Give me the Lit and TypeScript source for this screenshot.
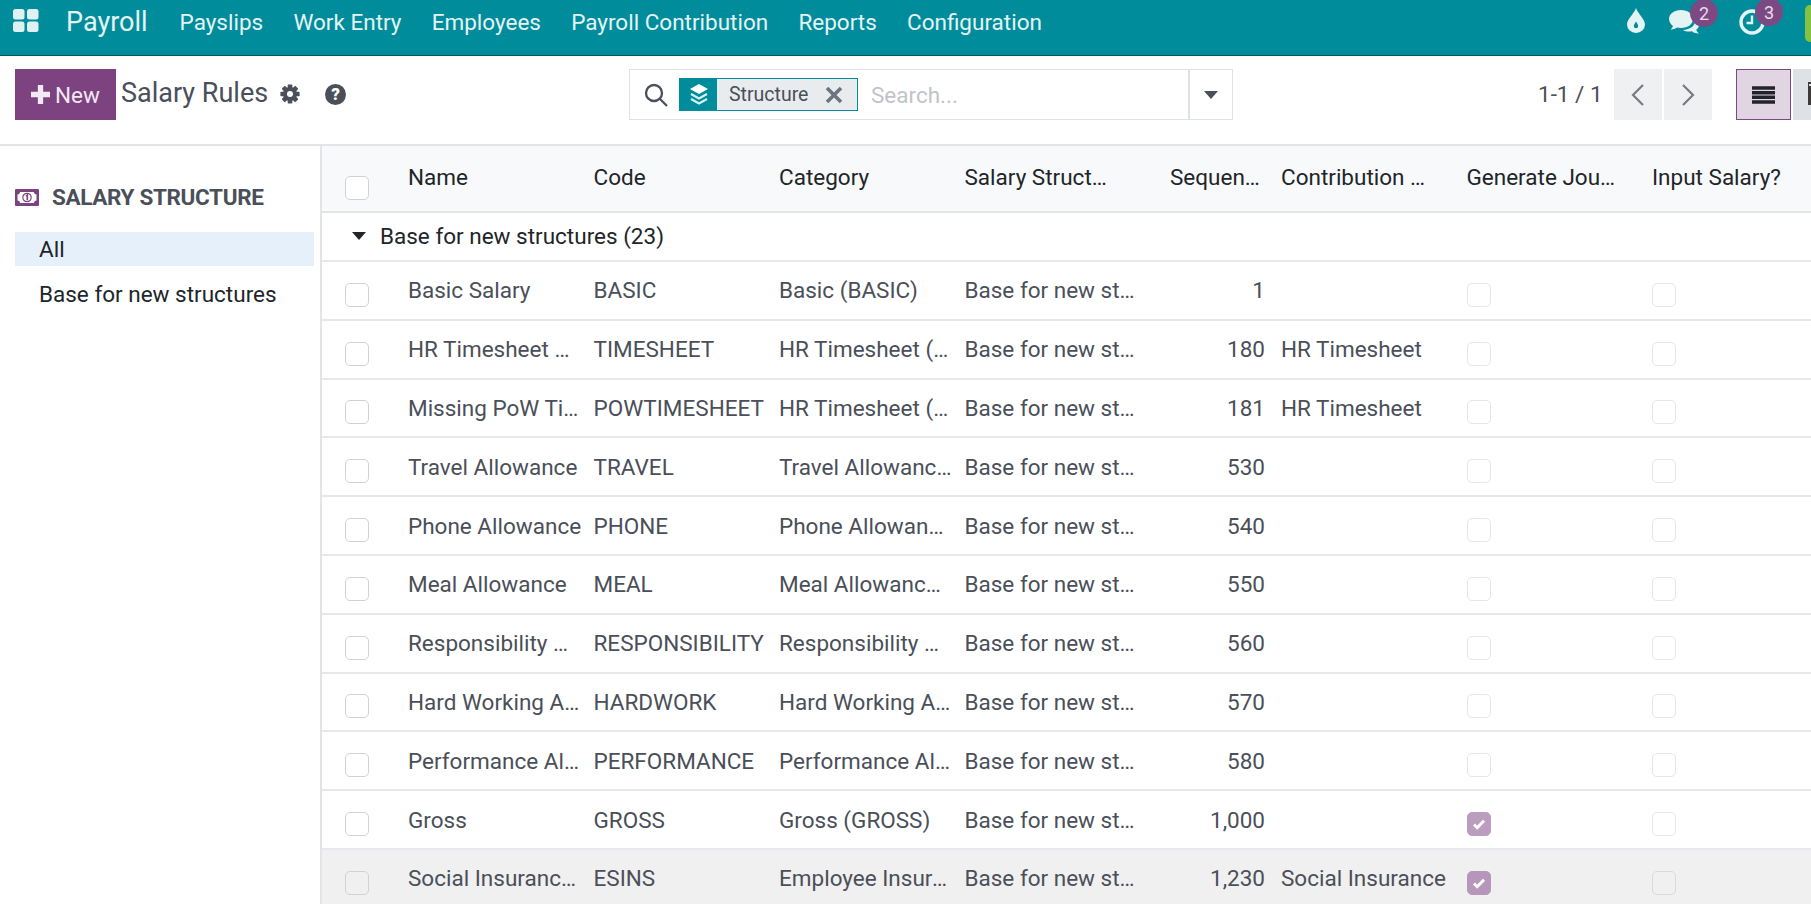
import { LitElement, html, css, svg } from "lit";
import { customElement } from "lit/decorators.js";

const menu = ["Payslips", "Work Entry", "Employees", "Payroll Contribution", "Reports", "Configuration"];

const columns = [
  { label: "Name", cls: "" },
  { label: "Code", cls: "" },
  { label: "Category", cls: "" },
  { label: "Salary Structure", cls: "" },
  { label: "Sequence", cls: "num" },
  { label: "Contribution Register", cls: "" },
  { label: "Generate Journal Entry", cls: "" },
  { label: "Input Salary?", cls: "" },
];

type Rule = [string, string, string, string, string, boolean?];

const rules: Rule[] = [
  ["Basic Salary", "BASIC", "Basic (BASIC)", "1", ""],
  ["HR Timesheet Deduction", "TIMESHEET", "HR Timesheet (TIMESHEET)", "180", "HR Timesheet"],
  ["Missing PoW Timesheet", "POWTIMESHEET", "HR Timesheet (TIMESHEET)", "181", "HR Timesheet"],
  ["Travel Allowance", "TRAVEL", "Travel Allowance (TRAVEL)", "530", ""],
  ["Phone Allowance", "PHONE", "Phone Allowance (PHONE)", "540", ""],
  ["Meal Allowance", "MEAL", "Meal Allowance (MEAL)", "550", ""],
  ["Responsibility Allowance", "RESPONSIBILITY", "Responsibility Allowance", "560", ""],
  ["Hard Working Allowance", "HARDWORK", "Hard Working Allowance", "570", ""],
  ["Performance Allowance", "PERFORMANCE", "Performance Allowance", "580", ""],
  ["Gross", "GROSS", "Gross (GROSS)", "1,000", "", true],
  ["Social Insurance Employee", "ESINS", "Employee Insurance (ESINS)", "1,230", "Social Insurance", true],
];

const gear = svg`<svg class="gear" viewBox="0 0 20 20">
  <g fill="#4a4f59">
    ${[0, 45, 90, 135, 180, 225, 270, 315].map(
      (a) => svg`<rect x="7.7" y="0.4" width="4.6" height="5" rx="0.8" transform="rotate(${a} 10 10)"></rect>`
    )}
    <circle cx="10" cy="10" r="7"></circle>
  </g>
  <circle cx="10" cy="10" r="3" fill="#fff"></circle>
</svg>`;

@customElement("app-root")
export class AppRoot extends LitElement {
  static styles = css`
    :host {
      display: block;
      width: 1811px;
      height: 904px;
      overflow: hidden;
      background: #fff;
      font-family: Roboto, "Noto Sans", sans-serif;
      font-size: 22.5px;
      color: #4a4f59;
    }

    /* top bar */
    .navbar {
      height: 55px;
      background: #018c9b;
      border-bottom: 1px solid #01575c;
      display: flex;
      align-items: center;
      padding-left: 13px;
      color: #e4f4f5;
      position: relative;
    }
    .apps {
      width: 26px;
      height: 26px;
      margin-top: -12px;
      display: block;
    }
    .brand {
      font-size: 27px;
      margin-left: 27px;
      margin-right: 32px;
      margin-top: -12px;
    }
    .menu {
      display: flex;
      gap: 30.2px;
      font-size: 22.5px;
      margin-top: -12px;
    }
    .systray {
      margin-left: auto;
      display: flex;
      align-items: center;
      height: 100%;
    }
    .tray {
      position: relative;
      display: block;
    }
    .drop {
      width: 18px;
      height: 25px;
      margin-top: -14px;
      margin-right: 24px;
    }
    .chat {
      width: 31px;
      height: 25px;
      margin-top: -11px;
      margin-right: 39px;
    }
    .clock {
      width: 26px;
      height: 26px;
      margin-top: -12px;
      margin-right: 40px;
    }
    .badge {
      position: absolute;
      width: 28px;
      height: 28px;
      border-radius: 50%;
      background: #7c4a83;
      color: #e8dcea;
      font-size: 18px;
      display: flex;
      align-items: center;
      justify-content: center;
    }
    .badge.two {
      left: 1690px;
      top: -1px;
    }
    .badge.three {
      left: 1755px;
      top: -2px;
    }
    .user {
      width: 6px;
      height: 37px;
      margin-top: -9px;
      background: #84c341;
      border-radius: 5px 0 0 5px;
    }

    /* control panel */
    .panel {
      height: 90px;
      box-sizing: border-box;
      border-bottom: 2px solid #e2e4e8;
      display: grid;
      grid-template-columns: 629px 604px 1fr;
      padding-top: 13px;
    }
    .left {
      display: flex;
      align-items: flex-start;
      padding-left: 15px;
    }
    .new {
      width: 101px;
      height: 51px;
      background: #7c4380;
      color: #f3e9f3;
      display: flex;
      align-items: center;
      justify-content: center;
      gap: 5px;
      font-size: 22.5px;
    }
    .plus {
      width: 19px;
      height: 19px;
    }
    .title {
      font-size: 27px;
      margin-left: 5px;
      line-height: 48px;
    }
    .gear {
      width: 20px;
      height: 20px;
      margin-left: 12px;
      margin-top: 15px;
    }
    .help {
      width: 21px;
      height: 21px;
      margin-left: 25px;
      margin-top: 15px;
      border-radius: 50%;
      background: #4a4f59;
      color: #fff;
      font-size: 17px;
      font-weight: 900;
      line-height: 21px;
      text-align: center;
    }
    .search {
      height: 51px;
      box-sizing: border-box;
      border: 1px solid #dee2e6;
      display: flex;
      align-items: center;
    }
    .lens {
      width: 24px;
      height: 24px;
      margin-left: 14px;
    }
    .facet {
      height: 33px;
      box-sizing: border-box;
      margin-left: 11px;
      width: 179px;
      display: flex;
      border: 1px solid #018c9b;
      background: #e9ecef;
      font-size: 19.5px;
      align-items: center;
    }
    .facet-icon {
      width: 37px;
      height: 100%;
      background: #018c9b;
      display: flex;
      align-items: center;
      justify-content: center;
    }
    .facet-icon svg {
      width: 20px;
      height: 24px;
    }
    .facet-label {
      margin-left: 12px;
      width: 96px;
    }
    .facet-x {
      width: 18px;
      height: 18px;
    }
    .placeholder {
      margin-left: 13px;
      color: #bfc4ca;
      font-size: 22.5px;
      flex: 1;
    }
    .more {
      width: 42px;
      height: 100%;
      border-left: 2px solid #dee2e6;
      display: flex;
      align-items: center;
      justify-content: center;
    }
    .caret {
      width: 0;
      height: 0;
      border-left: 7px solid transparent;
      border-right: 7px solid transparent;
      border-top: 8px solid #4a4f59;
    }
    .right {
      display: flex;
      align-items: flex-start;
      padding-left: 305px;
    }
    .count {
      font-size: 22.5px;
      line-height: 51px;
      width: 76px;
    }
    .page {
      width: 48px;
      height: 51px;
      background: #eef0f2;
      margin-right: 2px;
      display: flex;
      align-items: center;
      justify-content: center;
    }
    .page svg {
      width: 16px;
      height: 24px;
    }
    .view {
      width: 55px;
      height: 51px;
      box-sizing: border-box;
      margin-left: 22px;
      background: #e2d5e3;
      border: 1px solid #7c4a83;
      display: flex;
      align-items: center;
      justify-content: center;
    }
    .view svg {
      width: 23px;
      height: 18px;
    }
    .view2 {
      width: 18px;
      height: 51px;
      margin-left: 2px;
      background: #dee2e6;
      overflow: hidden;
      display: flex;
      align-items: center;
      padding-left: 15px;
      box-sizing: border-box;
    }
    .view2 span {
      flex: none;
      width: 12px;
      height: 19px;
      margin-top: 1px;
      background: #3f3a3a;
      box-shadow: 0 -3px 0 -1px #dee2e6, 0 -4px 0 0 #3f3a3a;
    }

    /* content */
    .content {
      display: flex;
      height: 759px;
    }
    .sidebar {
      width: 322px;
      box-sizing: border-box;
      flex: none;
      border-right: 2px solid #e2e4e8;
      padding: 0 6px 0 15px;
    }
    .side-head {
      display: flex;
      align-items: center;
      gap: 13px;
      margin-top: 37px;
      height: 28px;
      font-weight: 700;
      font-size: 22.5px;
      letter-spacing: -0.35px;
    }
    .side-head svg {
      width: 24px;
      height: 17px;
    }
    .side-item {
      height: 34px;
      line-height: 34px;
      padding-left: 24px;
      margin-top: 11px;
      color: #212529;
      font-size: 22.5px;
    }
    .side-item.on {
      margin-top: 21px;
      background: #e6f0fb;
    }

    .list {
      flex: 1;
      overflow: hidden;
    }
    table {
      table-layout: fixed;
      border-collapse: collapse;
      width: 1329px;
    }
    col.c0 {
      width: 78px;
    }
    col.c1 {
      width: 185.5px;
    }
    col.c2 {
      width: 131px;
    }
    th,
    td {
      padding: 0 4px 0 8px;
      font-weight: 400;
      text-align: left;
      white-space: nowrap;
      overflow: hidden;
      text-overflow: ellipsis;
      box-sizing: border-box;
    }
    th {
      height: 66px;
      background: #f8f9fa;
      color: #212529;
      padding-bottom: 4px;
      border-bottom: 2px solid #e2e4e8;
    }
    th span {
      display: block;
      max-width: 150px;
      overflow: hidden;
      text-overflow: ellipsis;
    }
    th.num span {
      max-width: 95px;
      margin-left: auto;
    }
    .num {
      text-align: right;
      padding: 0 8px 0 0;
    }
    th.num {
      padding-bottom: 4px;
    }
    .group td {
      height: 49px;
      color: #212529;
      padding-left: 30px;
      padding-bottom: 1px;
      border-bottom: 2px solid #e6e8eb;
    }
    .group .caret {
      display: inline-block;
      border-top-color: #212529;
      margin-right: 14px;
      vertical-align: 4px;
    }
    tbody td {
      height: 58.8px;
      border-bottom: 2px solid #e6e8eb;
    }
    td.box,
    th.box {
      padding: 9px 0 0 23px;
      overflow: visible;
    }
    th.box {
      padding-top: 19px;
    }
    tr.hover td {
      background: #f0f0f0;
    }
    .check {
      display: block;
      width: 24px;
      height: 24px;
      box-sizing: border-box;
      border: 1px solid #cfd3d7;
      border-radius: 5px;
      background: #fff;
    }
    .muted {
      border-color: #e4e6e9;
    }
    tr.hover .check {
      background: #f0f0f0;
    }
    tr.hover .muted {
      border-color: #d8dadc;
    }
    .check.on {
      background: #bb9dbf;
      border-color: #bb9dbf;
      display: flex;
      align-items: center;
      justify-content: center;
    }
    tr.hover .check.on {
      background: #b696ba;
      border-color: #b696ba;
    }
    .check svg {
      width: 14px;
      height: 14px;
    }
    td.flag {
      padding-top: 9px;
      padding-bottom: 0;
      overflow: visible;
    }
  `;

  renderFlag(on?: boolean) {
    if (on) {
      return html`<span class="check on">
        <svg viewBox="0 0 14 14"><path d="M2 7.500l3.200 3.200L12 3.800" fill="none" stroke="#fff" stroke-width="3" /></svg>
      </span>`;
    }
    return html`<span class="check muted"></span>`;
  }

  renderNavbar() {
    return html`
      <header class="navbar">
        <svg class="apps" viewBox="0 0 26 26">
          <g fill="#dff1f2">
            <rect x="0" y="0" width="11.500" height="10.500" rx="2.500"></rect>
            <rect x="14" y="0" width="11.500" height="10.500" rx="2.500"></rect>
            <rect x="0" y="12.500" width="11.500" height="10.500" rx="2.500"></rect>
            <rect x="14" y="12.500" width="11.500" height="10.500" rx="2.500"></rect>
          </g>
        </svg>
        <span class="brand">Payroll</span>
        <nav class="menu">${menu.map((m) => html`<span>${m}</span>`)}</nav>
        <div class="systray">
          <svg class="tray drop" viewBox="0 0 18 25">
            <path
              fill-rule="evenodd"
              fill="#e4f4f5"
              d="M9 0C11 6 18 11 18 16.500A9 8.500 0 0 1 0 16.500C0 11 7 6 9 0ZM9 13.500C8 15.500 6.800 16.500 6.800 18A2.200 2.200 0 0 0 11.200 18C11.200 16.500 10 15.500 9 13.500Z"
            />
          </svg>
          <svg class="tray chat" viewBox="0 0 31 25">
            <path
              fill="#e4f4f5"
              d="M12 0C5 0 0 4 0 9c0 3 2 5.500 4 7-0.500 1.500-1.500 2.500-2.500 3.500 3 0 5-1 6.500-2 1.300 0.300 2.700 0.500 4 0.500 7 0 12-4 12-9s-5-9-12-9z"
            />
            <path
              fill="#e4f4f5"
              d="M26 11c0 5-5 8.500-12 9 1.500 1 3.500 1.500 6 1.500 1 0 2-0.100 3-0.300 1.500 1.300 3.500 2.300 7 2.300-1.300-1-2.300-2.300-2.800-3.800 1.800-1.200 2.800-3 2.800-4.700 0-1.500-1.500-3-4-4z"
            />
          </svg>
          <svg class="tray clock" viewBox="0 0 26 26">
            <circle cx="13" cy="13" r="11" fill="none" stroke="#e4f4f5" stroke-width="3.400"></circle>
            <path d="M13 6.500V14H7.500" fill="none" stroke="#e4f4f5" stroke-width="2.400" />
          </svg>
          <div class="user"></div>
        </div>
        <span class="badge two">2</span>
        <span class="badge three">3</span>
      </header>
    `;
  }

  renderPanel() {
    return html`
      <section class="panel">
        <div class="left">
          <div class="new">
            <svg class="plus" viewBox="0 0 18 18"><path d="M9 0v18M0 9h18" stroke="#f3e9f3" stroke-width="5" /></svg>
            New
          </div>
          <span class="title">Salary Rules</span>
          ${gear}
          <span class="help">?</span>
        </div>
        <div class="search">
          <svg class="lens" viewBox="0 0 24 24">
            <circle cx="10" cy="10" r="8" fill="none" stroke="#4a4f59" stroke-width="2.300"></circle>
            <path d="M16 16l7 7" stroke="#4a4f59" stroke-width="2.300" />
          </svg>
          <div class="facet">
            <span class="facet-icon">
              <svg viewBox="0 0 20 24">
                <path fill="#fff" d="M10 1l9 5-9 5-9-5z" />
                <path fill="none" stroke="#d5f0f2" stroke-width="2.200" d="M2 11l8 4.500 8-4.500M2 16l8 4.500 8-4.500" />
              </svg>
            </span>
            <span class="facet-label">Structure</span>
            <svg class="facet-x" viewBox="0 0 18 18"><path d="M2 2l14 14M16 2L2 16" stroke="#6c757d" stroke-width="3.600" /></svg>
          </div>
          <span class="placeholder">Search...</span>
          <span class="more"><i class="caret"></i></span>
        </div>
        <div class="right">
          <span class="count">1-1 / 1</span>
          <span class="page">
            <svg viewBox="0 0 16 24"><path d="M13 2L3 12l10 10" fill="none" stroke="#777b80" stroke-width="2.200" /></svg>
          </span>
          <span class="page">
            <svg viewBox="0 0 16 24"><path d="M3 2l10 10L3 22" fill="none" stroke="#777b80" stroke-width="2.200" /></svg>
          </span>
          <span class="view">
            <svg viewBox="0 0 23 18">
              <path d="M0 2h23M0 6.700h23M0 11.300h23M0 16h23" stroke="#212529" stroke-width="3.400" />
            </svg>
          </span>
          <span class="view2"><span></span></span>
        </div>
      </section>
    `;
  }

  renderSidebar() {
    return html`
      <aside class="sidebar">
        <div class="side-head">
          <svg viewBox="0 0 24 17">
            <rect width="24" height="17" rx="1" fill="#7c4380"></rect>
            <path fill="#fff" d="M5 3h14c0 1.500 1 2.500 2.500 2.500v6C20 11.500 19 12.500 19 14H5c0-1.500-1-2.500-2.500-2.500v-6C4 5.500 5 4.500 5 3z" />
            <circle cx="12" cy="8.500" r="4.200" fill="none" stroke="#7c4380" stroke-width="1.200"></circle>
            <path d="M11 7.200l1.300-1v5" fill="none" stroke="#7c4380" stroke-width="1.600" />
          </svg>
          SALARY STRUCTURE
        </div>
        <div class="side-item on">All</div>
        <div class="side-item">Base for new structures</div>
      </aside>
    `;
  }

  renderTable() {
    return html`
      <div class="list">
        <table>
          <colgroup>
            <col class="c0" />
            <col class="c1" />
            <col class="c1" />
            <col class="c1" />
            <col class="c1" />
            <col class="c2" />
            <col class="c1" />
            <col class="c1" />
            <col class="c1" />
          </colgroup>
          <thead>
            <tr>
              <th class="box"><span class="check"></span></th>
              ${columns.map((c) => html`<th class=${c.cls}><span>${c.label}</span></th>`)}
            </tr>
          </thead>
          <tbody>
            <tr class="group">
              <td colspan="9"><i class="caret"></i>Base for new structures (23)</td>
            </tr>
            ${rules.map(
              (r, i) => html`
                <tr class=${i === rules.length - 1 ? "hover" : ""}>
                  <td class="box"><span class="check"></span></td>
                  <td>${r[0]}</td>
                  <td>${r[1]}</td>
                  <td>${r[2]}</td>
                  <td>Base for new structures</td>
                  <td class="num">${r[3]}</td>
                  <td>${r[4]}</td>
                  <td class="flag">${this.renderFlag(r[5])}</td>
                  <td class="flag">${this.renderFlag()}</td>
                </tr>
              `
            )}
          </tbody>
        </table>
      </div>
    `;
  }

  render() {
    return html`
      ${this.renderNavbar()} ${this.renderPanel()}
      <div class="content">${this.renderSidebar()} ${this.renderTable()}</div>
    `;
  }
}

declare global {
  interface HTMLElementTagNameMap {
    "app-root": AppRoot;
  }
}
